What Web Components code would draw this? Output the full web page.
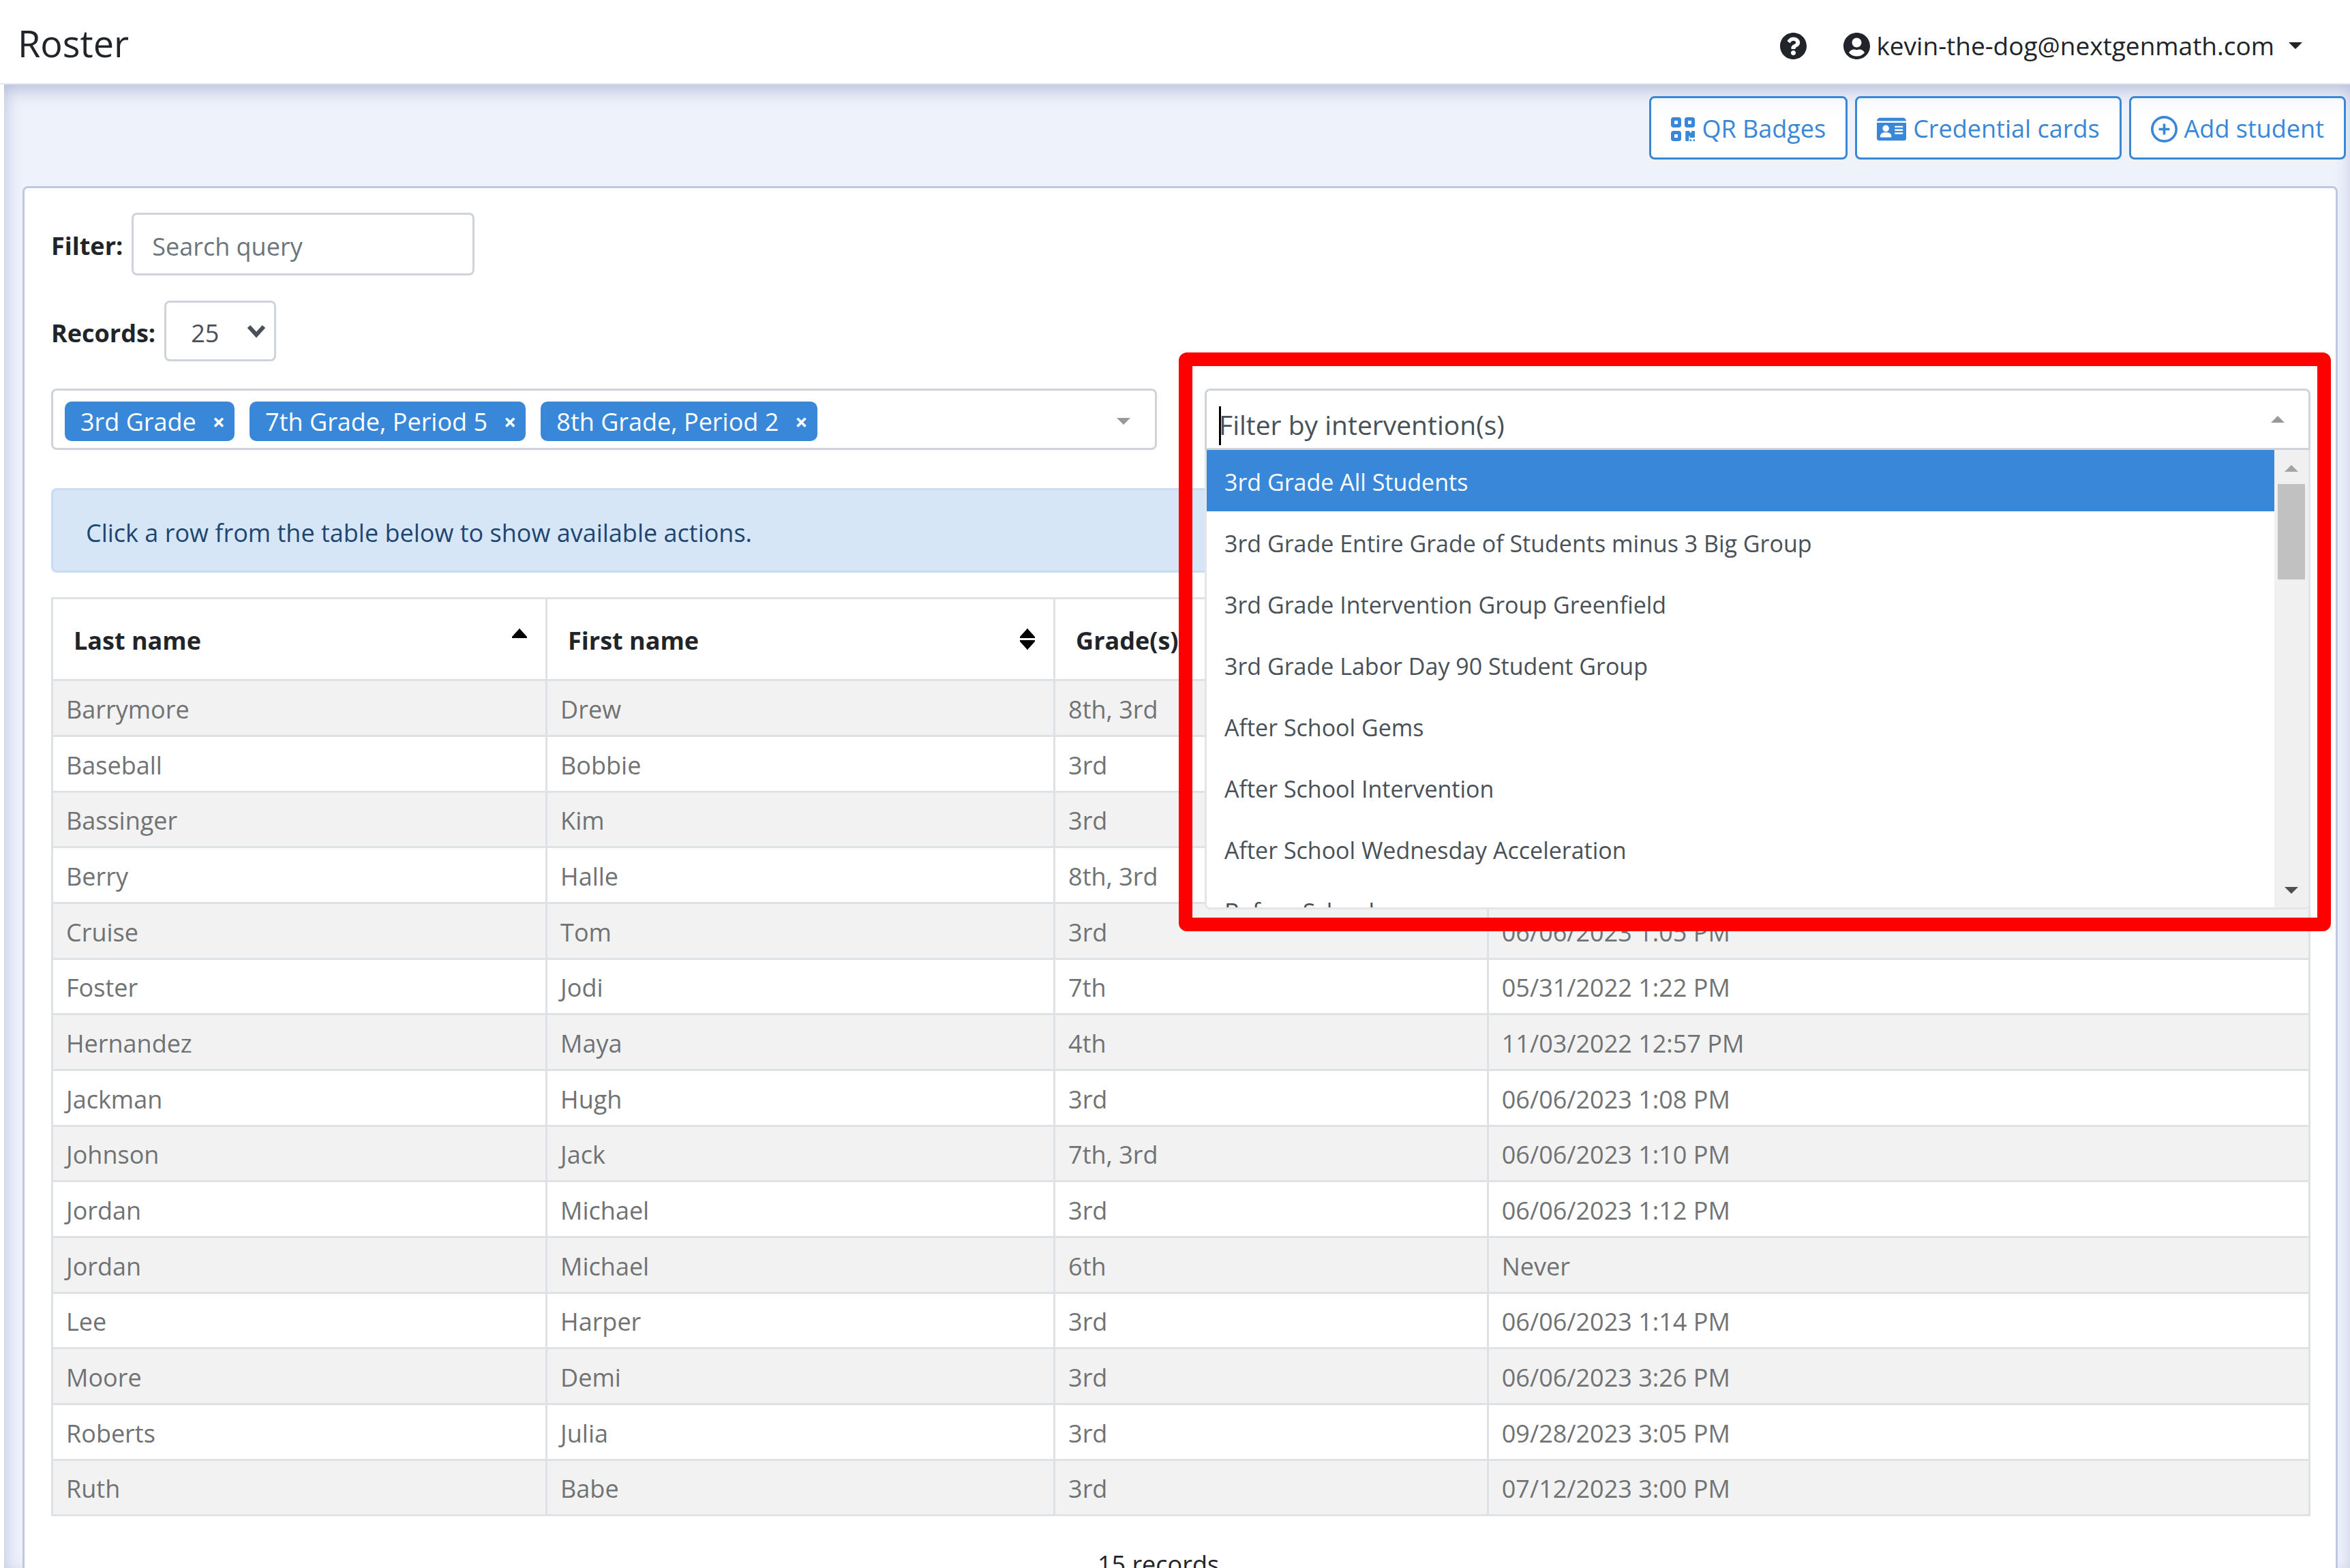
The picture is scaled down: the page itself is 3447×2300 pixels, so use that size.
<!DOCTYPE html>
<html lang="en">
<head>
<meta charset="utf-8">
<title>Roster</title>
<style>
  :root {
    --color-primary: #3987d9;
    --color-fg: #212529;
    --color-fg-control: #495057;
    --color-fg-muted: #707274;
    --color-border: #ced4da;
    --color-line: #dee2e6;
    --color-panel-border: #bfc8e2;
    --type-body: 36px;
    --type-title: 54px;
    --leading: 54px;
    --radius: 8px;
  }
  body {
    margin: 0;
    background: #fff;
    color: var(--color-fg);
    font: var(--type-body)/var(--leading) "Open Sans", "Noto Sans", sans-serif;
  }
</style>
</head>
<body>
<roster-app></roster-app>

<script>
const INTERVENTIONS = [
  "3rd Grade All Students",
  "3rd Grade Entire Grade of Students minus 3 Big Group",
  "3rd Grade Intervention Group Greenfield",
  "3rd Grade Labor Day 90 Student Group",
  "After School Gems",
  "After School Intervention",
  "After School Wednesday Acceleration",
  "Before School",
];

// last name, first name, grade(s), last login
const STUDENTS = [
  ["Barrymore", "Drew", "8th, 3rd", ""],
  ["Baseball", "Bobbie", "3rd", ""],
  ["Bassinger", "Kim", "3rd", ""],
  ["Berry", "Halle", "8th, 3rd", ""],
  ["Cruise", "Tom", "3rd", "06/06/2023 1:05 PM"],
  ["Foster", "Jodi", "7th", "05/31/2022 1:22 PM"],
  ["Hernandez", "Maya", "4th", "11/03/2022 12:57 PM"],
  ["Jackman", "Hugh", "3rd", "06/06/2023 1:08 PM"],
  ["Johnson", "Jack", "7th, 3rd", "06/06/2023 1:10 PM"],
  ["Jordan", "Michael", "3rd", "06/06/2023 1:12 PM"],
  ["Jordan", "Michael", "6th", "Never"],
  ["Lee", "Harper", "3rd", "06/06/2023 1:14 PM"],
  ["Moore", "Demi", "3rd", "06/06/2023 3:26 PM"],
  ["Roberts", "Julia", "3rd", "09/28/2023 3:05 PM"],
  ["Ruth", "Babe", "3rd", "07/12/2023 3:00 PM"],
];

// name → [viewBox, width, height, markup]
const ICONS = {
  help: ["8 8 496 496", 39, 39, `<path d="M504 256c0 136.997-111.043 248-248 248S8 392.997 8 256C8 119.083 119.043 8 256 8s248 111.083 248 248zM262.655 90c-54.497 0-89.255 22.957-116.549 63.758-3.536 5.286-2.353 12.415 2.715 16.258l34.699 26.31c5.205 3.947 12.621 3.008 16.665-2.122 17.864-22.658 30.113-35.797 57.303-35.797 20.429 0 45.698 13.148 45.698 32.958 0 14.976-12.363 22.667-32.534 33.976C247.128 238.528 216 254.941 216 296v4c0 6.627 5.373 12 12 12h56c6.627 0 12-5.373 12-12v-1.333c0-28.462 83.186-29.647 83.186-106.667 0-58.002-60.165-102-116.531-102zM256 338c-25.365 0-46 20.635-46 46 0 25.364 20.635 46 46 46s46-20.636 46-46c0-25.365-20.635-46-46-46z"/>`],
  user: ["0 8 496 496", 39, 39, `<path d="M248 8C111 8 0 119 0 256s111 248 248 248 248-111 248-248S385 8 248 8zm0 96c48.6 0 88 39.4 88 88s-39.4 88-88 88-88-39.4-88-88 39.4-88 88-88zm0 344c-58.7 0-111.3-26.6-146.5-68.2 18.8-35.4 55.6-59.8 98.5-59.8 2.4 0 4.8.4 7.1 1.1 13 4.2 26.6 6.9 40.9 6.9 14.3 0 28-2.7 40.9-6.9 2.3-.7 4.7-1.1 7.1-1.1 42.9 0 79.7 24.4 98.5 59.8C359.3 421.4 306.7 448 248 448z"/>`],
  qr: ["0 32 448 448", 35, 35, `<path fill-rule="evenodd" d="M48 32h96a48 48 0 0 1 48 48v96a48 48 0 0 1-48 48H48a48 48 0 0 1-48-48V80a48 48 0 0 1 48-48zm16 64v64h64V96zM304 32h96a48 48 0 0 1 48 48v96a48 48 0 0 1-48 48h-96a48 48 0 0 1-48-48V80a48 48 0 0 1 48-48zm16 64v64h64V96zM48 288h96a48 48 0 0 1 48 48v96a48 48 0 0 1-48 48H48a48 48 0 0 1-48-48v-96a48 48 0 0 1 48-48zm16 64v64h64v-64zM272 288h64a16 16 0 0 1 16 16v16h32v-16a16 16 0 0 1 16-16h32a16 16 0 0 1 16 16v96a16 16 0 0 1-16 16h-64a16 16 0 0 1-16-16v-16h-16v80a16 16 0 0 1-16 16h-32a16 16 0 0 1-16-16V304a16 16 0 0 1 16-16zM352 448h32v32h-32zM416 448h32v32h-32z"/>`],
  card: ["0 32 576 448", 43, 35, `<path fill-rule="evenodd" d="M0 96a64 64 0 0 1 64-64h448a64 64 0 0 1 64 64zM0 128h576v304a48 48 0 0 1-48 48H48a48 48 0 0 1-48-48zM176 176a64 64 0 1 0 .1 0zM144 320a80 80 0 0 0-80 80c0 9 7 16 16 16h192c9 0 16-7 16-16a80 80 0 0 0-80-80zM352 192v32h160v-32zM352 256v32h160v-32zM352 320v32h160v-32z"/>`],
  plus: ["0 0 512 512", 39, 39, `<circle cx="256" cy="256" r="232" fill="none" stroke="currentColor" stroke-width="48"/><path d="M232 152h48v80h80v48h-80v80h-48v-80h-80v-48h80z"/>`],
  down: ["0 0 20 10", 20, 10, `<path d="M0 0h20L10 10z"/>`],
  up: ["0 0 20 10", 20, 10, `<path d="M0 10h20L10 0z"/>`],
  sortup: ["0 0 22 14", 22, 14, `<path d="M1 14a1 1 0 0 1-1-2L10 1a1 1 0 0 1 2 0l10 11a1 1 0 0 1-1 2z"/>`],
  sortdown: ["0 0 22 14", 22, 14, `<path d="M1 0a1 1 0 0 0-1 2l10 11a1 1 0 0 0 2 0L22 2a1 1 0 0 0-1-2z"/>`],
  chevron: ["0 0 28 20", 28, 20, `<path d="M3 3l11 12L25 3" fill="none" stroke="currentColor" stroke-width="6"/>`],
};

// Shared base: each element hands over its shadow markup through render().
class RosterElement extends HTMLElement {
  connectedCallback() {
    if (this.shadowRoot) return;
    this.attachShadow({ mode: "open" });
    this.shadowRoot.innerHTML = this.render();
  }
}

class RosterIcon extends RosterElement {
  render() {
    const [box, width, height, markup] = ICONS[this.getAttribute("name")];
    return `<style>
        :host { display: inline-flex; flex: none; }
        svg { display: block; }
      </style>
      <svg viewBox="${box}" width="${width}" height="${height}" fill="currentColor" aria-hidden="true">${markup}</svg>`;
  }
}

class RosterHeader extends RosterElement {
  render() {
    return `<style>
        :host {
          display: flex;
          align-items: center;
          justify-content: space-between;
          height: 124px;
          padding: 4px 70px 0 26px;
          border-bottom: 2px solid #e3e7f3;
          box-sizing: border-box;
          background: #fff;
        }
        h1 { margin: 0; font-size: var(--type-title); line-height: 72px; font-weight: 500; }
        nav { display: flex; align-items: center; gap: 54px; padding-top: 8px; }
        button {
          display: flex;
          align-items: center;
          padding: 0;
          border: 0;
          background: none;
          color: inherit;
          font: inherit;
          font-size: 37px;
        }
        .user { gap: 9px; }
        .user roster-icon:last-child { margin-left: 12px; }
      </style>
      <h1>Roster</h1>
      <nav>
        <button aria-label="Help"><roster-icon name="help"></roster-icon></button>
        <button class="user">
          <roster-icon name="user"></roster-icon>
          <slot></slot>
          <roster-icon name="down"></roster-icon>
        </button>
      </nav>`;
  }
}

class ActionButton extends RosterElement {
  render() {
    return `<style>
        :host { display: block; }
        button {
          display: flex;
          align-items: center;
          gap: 10px;
          height: 93px;
          padding: 3px 29px 0;
          border: 3px solid var(--color-primary);
          border-radius: var(--radius);
          background: linear-gradient(#f8f9fc, #fff 30px);
          color: var(--color-primary);
          font: inherit;
        }
      </style>
      <button><roster-icon name="${this.getAttribute("icon")}"></roster-icon><slot></slot></button>`;
  }
}

class RecordControls extends RosterElement {
  render() {
    return `<style>
        :host { display: grid; gap: 37px; }
        .row { display: flex; align-items: center; gap: 13px; }
        label { font-weight: 700; padding-top: 6px; }
        input, select {
          box-sizing: border-box;
          border: 3px solid var(--color-border);
          border-radius: var(--radius);
          background: #fff;
          color: var(--color-fg-control);
          font: inherit;
        }
        input { width: 503px; height: 92px; padding: 6px 27px 0; }
        input::placeholder { color: #6c757d; opacity: 1; }
        .select { display: grid; align-items: center; }
        .select > * { grid-area: 1 / 1; }
        select { appearance: none; width: 164px; height: 89px; padding: 6px 70px 0 36px; }
        roster-icon { justify-self: end; margin-right: 15px; color: var(--color-fg-control); pointer-events: none; }
      </style>
      <div class="row">
        <label for="query">Filter:</label>
        <input id="query" type="text" placeholder="Search query">
      </div>
      <div class="row">
        <label for="records">Records:</label>
        <span class="select">
          <select id="records"><option>25</option></select>
          <roster-icon name="chevron"></roster-icon>
        </span>
      </div>`;
  }
}

class ClassSelect extends RosterElement {
  render() {
    const tags = this.getAttribute("values").split("|")
      .map((value) => `<li>${value}<button aria-label="Remove ${value}">×</button></li>`)
      .join("");
    return `<style>
        :host {
          display: flex;
          align-items: center;
          justify-content: space-between;
          box-sizing: border-box;
          height: 90px;
          padding: 6px 36px 0 17px;
          border: 3px solid var(--color-border);
          border-radius: var(--radius);
          background: #fff;
        }
        ul { display: flex; gap: 22px; margin: 0; padding: 0; list-style: none; }
        li {
          display: flex;
          align-items: center;
          gap: 24px;
          height: 56px;
          padding: 2px 14px 0 23px;
          border-radius: 10px;
          background: var(--color-primary);
          color: #fff;
        }
        button {
          padding: 0;
          border: 0;
          background: none;
          color: inherit;
          font: inherit;
          font-size: 32px;
          font-weight: 700;
        }
        roster-icon { color: #999; }
      </style>
      <ul>${tags}</ul>
      <roster-icon name="down"></roster-icon>`;
  }
}

class InterventionSelect extends RosterElement {
  render() {
    const options = INTERVENTIONS
      .map((name, i) => `<li role="option" aria-selected="${i === 0}">${name}</li>`)
      .join("");
    return `<style>
        :host { display: block; position: relative; }
        .field {
          display: flex;
          align-items: center;
          box-sizing: border-box;
          height: 90px;
          padding: 0 35px 0 18px;
          border: 3px solid var(--color-border);
          border-radius: var(--radius) var(--radius) 0 0;
          background: #fff;
          color: #999;
        }
        input {
          flex: 1;
          min-width: 0;
          padding: 16px 0 0;
          border: 0;
          outline: 0;
          background: none;
          font: inherit;
          font-size: 39px;
        }
        input::placeholder { color: var(--color-fg-control); opacity: 1; }
        .caret { width: 3px; height: 57px; margin-top: 18px; margin-right: -3px; background: #000; }
        .menu {
          position: absolute;
          z-index: 1;
          top: 100%;
          left: 0;
          right: 0;
          display: flex;
          box-sizing: border-box;
          height: 674px;
          overflow: hidden;
          border: 3px solid #e3e5e8;
          border-top: 0;
          border-radius: 0 0 var(--radius) var(--radius);
          background: #fff;
        }
        ul { flex: 1; margin: 0; padding: 0; list-style: none; }
        li {
          height: 90px;
          padding-left: 26px;
          box-sizing: border-box;
          color: var(--color-fg-control);
          font-size: 34px;
          line-height: 94px;
        }
        li[aria-selected="true"] { background: var(--color-primary); color: #fff; }
        .scrollbar {
          display: flex;
          flex-direction: column;
          align-items: center;
          box-sizing: border-box;
          width: 50px;
          padding: 22px 0 20px;
          background: #f0f0f0;
          color: #a3a3a3;
        }
        .thumb { width: 40px; height: 140px; margin: 18px 0 auto; background: #c1c1c1; }
        .scrollbar roster-icon:last-child { color: #505050; }
        .highlight {
          position: absolute;
          z-index: 2;
          top: -53px;
          left: -38px;
          right: -30px;
          height: 849px;
          box-sizing: border-box;
          border: 20px solid #f00;
          border-radius: 12px;
          pointer-events: none;
        }
      </style>
      <div class="field">
        <span class="caret"></span>
        <input type="text" aria-label="Filter by intervention(s)" placeholder="Filter by intervention(s)">
        <roster-icon name="up"></roster-icon>
      </div>
      <div class="menu">
        <ul role="listbox">${options}</ul>
        <div class="scrollbar">
          <roster-icon name="up"></roster-icon>
          <span class="thumb"></span>
          <roster-icon name="down"></roster-icon>
        </div>
      </div>
      <div class="highlight"></div>`;
  }
}

class InfoAlert extends RosterElement {
  render() {
    return `<style>
        :host {
          display: flex;
          align-items: center;
          box-sizing: border-box;
          height: 124px;
          padding: 8px 48px 0;
          border: 3px solid #c8dcf4;
          border-radius: var(--radius);
          background: #d7e6f6;
          color: #1e4670;
        }
      </style>
      <slot></slot>`;
  }
}

class RosterTable extends RosterElement {
  render() {
    const rows = STUDENTS
      .map((row) => `<tr>${row.map((cell) => `<td>${cell}</td>`).join("")}</tr>`)
      .join("");
    return `<style>
        :host { display: block; }
        table { width: 100%; table-layout: fixed; border-collapse: collapse; }
        th, td { border: 3px solid var(--color-line); text-align: left; }
        th { height: 120px; padding: 0 27px 0 30px; box-sizing: border-box; font-weight: 700; }
        th div { display: flex; align-items: center; justify-content: space-between; }
        th div span { padding-top: 4px; }
        th .sort { display: grid; gap: 3px; color: #000; }
        .sort.asc { padding-bottom: 17px; }
        td { box-sizing: border-box; height: 82px; padding: 4px 19px 0; color: var(--color-fg-muted); }
        tbody tr:nth-child(3n) td { height: 81px; }
        tbody tr:nth-child(odd) { background: #f2f2f2; }
        .last { width: 21.9%; }
        .first { width: 22.5%; }
        .grades { width: 19.2%; }
      </style>
      <table>
        <colgroup><col class="last"><col class="first"><col class="grades"><col></colgroup>
        <thead>
          <tr>
            <th><div><span>Last name</span><div class="sort asc"><roster-icon name="sortup"></roster-icon></div></div></th>
            <th><div><span>First name</span><div class="sort"><roster-icon name="sortup"></roster-icon><roster-icon name="sortdown"></roster-icon></div></div></th>
            <th><div><span>Grade(s)</span></div></th>
            <th></th>
          </tr>
        </thead>
        <tbody>${rows}</tbody>
      </table>`;
  }
}

class RosterApp extends RosterElement {
  render() {
    return `<style>
        :host { display: flex; flex-direction: column; height: 100vh; overflow: hidden; }
        roster-header { flex: none; }
        main {
          flex: 1;
          min-height: 0;
          margin-left: 6px;
          padding-top: 17px;
          background: #eef2fb;
          box-shadow: inset 2px 10px 28px -4px #b0b9d8;
          clip-path: inset(0);
        }
        .toolbar { display: flex; justify-content: flex-end; gap: 11px; padding-right: 6px; }
        .panel {
          margin: 39px 18px 0 27px;
          padding: 36px 37px 80px 39px;
          border: 3px solid var(--color-panel-border);
          border-radius: var(--radius);
          background: #fff;
        }
        .filters { display: grid; grid-template-columns: 1fr 1fr; gap: 70px; margin: 40px 0 56px; }
        roster-table { margin-top: 36px; }
        footer { padding: 44px 66px 0 0; text-align: center; }
      </style>
      <roster-header>kevin-the-dog@nextgenmath.com</roster-header>
      <main>
        <div class="toolbar">
          <action-button icon="qr">QR Badges</action-button>
          <action-button icon="card">Credential cards</action-button>
          <action-button icon="plus">Add student</action-button>
        </div>
        <section class="panel">
          <record-controls></record-controls>
          <div class="filters">
            <class-select values="3rd Grade|7th Grade, Period 5|8th Grade, Period 2"></class-select>
            <intervention-select></intervention-select>
          </div>
          <info-alert>Click a row from the table below to show available actions.</info-alert>
          <roster-table></roster-table>
          <footer>15 records</footer>
        </section>
      </main>`;
  }
}

customElements.define("roster-icon", RosterIcon);
customElements.define("roster-header", RosterHeader);
customElements.define("action-button", ActionButton);
customElements.define("record-controls", RecordControls);
customElements.define("class-select", ClassSelect);
customElements.define("intervention-select", InterventionSelect);
customElements.define("info-alert", InfoAlert);
customElements.define("roster-table", RosterTable);
customElements.define("roster-app", RosterApp);
</script>
</body>
</html>
